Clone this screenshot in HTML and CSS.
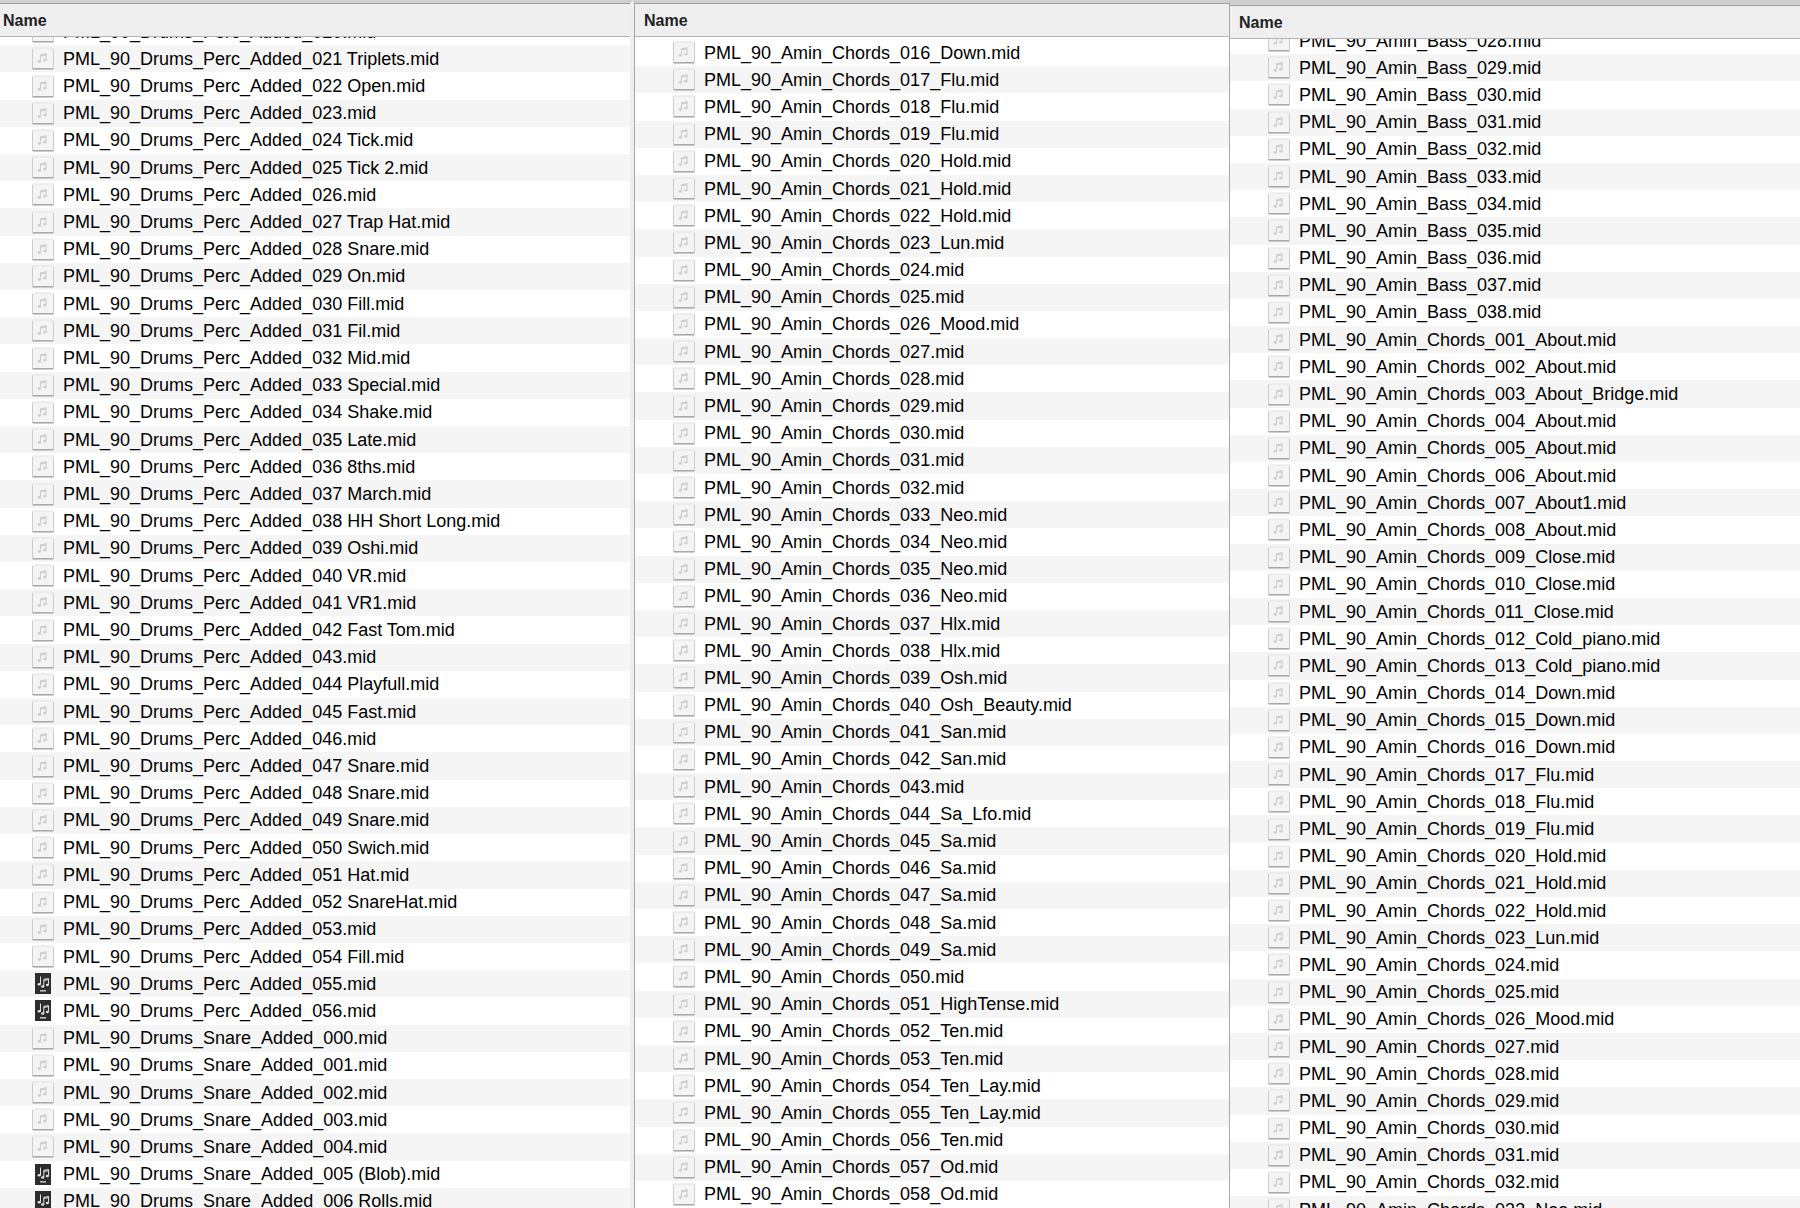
FILE: index.html
```html
<!DOCTYPE html>
<html lang="en">
<head>
    <meta charset="UTF-8">
    <meta name="viewport" content="width=device-width, initial-scale=1.0">
    <title>MIDI Files</title>
    <link rel="stylesheet" href="styles.css">
</head>
<body>
    <!-- shared file icons -->
    <svg class="sprite" aria-hidden="true">
        <symbol id="icon-midi" viewBox="0 0 22 23">
            <rect x="0.5" y="1" width="21" height="21" rx="1" fill="#f4f4f4" stroke="#e2e2e2"/>
            <path d="M0.5 2v19M21.5 2v19" stroke="#cccccc" fill="none"/>
            <path d="M0.5 21.8h21" stroke="#999999" stroke-width="1.2" fill="none"/>
            <path d="M8.5 14V8l5.5-1.2v6M8.5 9l5.5-1.2" stroke="#cfcfcf" stroke-width="1.2" fill="none"/>
            <ellipse cx="7.3" cy="14.4" rx="1.7" ry="1.4" fill="#cfcfcf"/>
            <ellipse cx="12.8" cy="13.2" rx="1.7" ry="1.4" fill="#cfcfcf"/>
        </symbol>
        <symbol id="icon-dark" viewBox="0 0 22 23">
            <rect x="3" y="1" width="16" height="21" fill="#2d2d2d"/>
            <path d="M8.5 12V4.5M11.8 14V7.3l4.8-.7v6.2M11.8 8.4l4.8-.7" stroke="#e4e4e4" stroke-width="1" fill="none"/>
            <ellipse cx="7.2" cy="12.2" rx="1.6" ry="1.3" fill="#e4e4e4"/>
            <ellipse cx="10.7" cy="14.5" rx="1.6" ry="1.3" fill="#e4e4e4"/>
            <ellipse cx="15.4" cy="13" rx="1.5" ry="1.2" fill="#e4e4e4"/>
            <path d="M8 18.8h6" stroke="#bcbcbc" stroke-width="1.6" fill="none"/>
        </symbol>
    </svg>

    <main class="panes">
        <section class="pane pane-drums">
            <h2 class="pane-header">Name</h2>
            <div class="pane-body"><ul class="files" id="drums"></ul></div>
        </section>
        <section class="pane pane-chords">
            <h2 class="pane-header">Name</h2>
            <div class="pane-body"><ul class="files" id="chords"></ul></div>
        </section>
        <section class="pane pane-bass">
            <h2 class="pane-header">Name</h2>
            <div class="pane-body"><ul class="files" id="bass"></ul></div>
        </section>
    </main>

    <script>
        const chordNames = [
            '001_About', '002_About', '003_About_Bridge', '004_About', '005_About',
            '006_About', '007_About1', '008_About', '009_Close', '010_Close',
            '011_Close', '012_Cold_piano', '013_Cold_piano', '014_Down', '015_Down',
            '016_Down', '017_Flu', '018_Flu', '019_Flu', '020_Hold',
            '021_Hold', '022_Hold', '023_Lun', '024', '025',
            '026_Mood', '027', '028', '029', '030',
            '031', '032', '033_Neo', '034_Neo', '035_Neo',
            '036_Neo', '037_Hlx', '038_Hlx', '039_Osh', '040_Osh_Beauty',
            '041_San', '042_San', '043', '044_Sa_Lfo', '045_Sa',
            '046_Sa', '047_Sa', '048_Sa', '049_Sa', '050',
            '051_HighTense', '052_Ten', '053_Ten', '054_Ten_Lay', '055_Ten_Lay',
            '056_Ten', '057_Od', '058_Od'
        ];
        const percNames = [
            '020', '021 Triplets', '022 Open', '023', '024 Tick', '025 Tick 2',
            '026', '027 Trap Hat', '028 Snare', '029 On', '030 Fill', '031 Fil',
            '032 Mid', '033 Special', '034 Shake', '035 Late', '036 8ths',
            '037 March', '038 HH Short Long', '039 Oshi', '040 VR', '041 VR1',
            '042 Fast Tom', '043', '044 Playfull', '045 Fast', '046',
            '047 Snare', '048 Snare', '049 Snare', '050 Swich', '051 Hat',
            '052 SnareHat', '053', '054 Fill', '055', '056'
        ];
        const snareNames = ['000', '001', '002', '003', '004', '005 (Blob)', '006 Rolls'];
        const bassNames = ['028', '029', '030', '031', '032', '033', '034', '035', '036', '037', '038'];

        // files that show the dark icon
        const darkIcons = ['Perc_Added_055', 'Perc_Added_056', 'Snare_Added_005', 'Snare_Added_006'];

        function withPrefix(prefix, names) {
            return names.map(name => prefix + name + '.mid');
        }

        function renderFiles(id, files) {
            document.getElementById(id).innerHTML = files.map(file => {
                const icon = darkIcons.some(part => file.includes(part)) ? 'icon-dark' : 'icon-midi';
                return `<li class="file"><svg class="file-icon" aria-hidden="true"><use href="#${icon}"/></svg><span class="file-name">${file}</span></li>`;
            }).join('');
        }

        renderFiles('drums', [
            ...withPrefix('PML_90_Drums_Perc_Added_', percNames),
            ...withPrefix('PML_90_Drums_Snare_Added_', snareNames)
        ]);
        renderFiles('chords', withPrefix('PML_90_Amin_Chords_', chordNames.slice(15)));
        renderFiles('bass', [
            ...withPrefix('PML_90_Amin_Bass_', bassNames),
            ...withPrefix('PML_90_Amin_Chords_', chordNames.slice(0, 33))
        ]);
    </script>
</body>
</html>
```
FILE: styles.css
```css
* {
    box-sizing: border-box;
}

body {
    margin: 0;
    background-color: #fff;
    font-family: "Liberation Sans", Arial, sans-serif;
    color: #000;
}

.sprite {
    display: none;
}

.panes {
    display: grid;
    grid-template-columns: 634fr 595fr 571fr;
    height: 100vh;
    overflow: hidden;
}

.pane {
    display: flex;
    flex-direction: column;
    min-width: 0;
    min-height: 0;
    border-top: 3px solid #cfcfcf;
}

.pane-drums {
    border-right: 4px solid #eeeeee;
}

.pane-chords,
.pane-bass {
    border-left: 1px solid #a8a8a8;
}

.pane-bass {
    border-top-width: 5px;
}

.pane-header {
    flex: none;
    height: 34px;
    margin: 0;
    padding-left: 3px;
    border-top: 1px solid #a0a0a0;
    border-bottom: 1px solid #b4b4b4;
    background-color: #efefef;
    font-size: 16px;
    font-weight: bold;
    line-height: 34px;
    color: #222;
}

.pane-chords .pane-header,
.pane-bass .pane-header {
    padding-left: 9px;
}

.pane-body {
    display: flex;
    flex: 1;
    min-height: 0;
    overflow: hidden;
}

/* rows share the height evenly, the lists are scrolled part of a row */
.files {
    display: flex;
    flex: 1;
    flex-direction: column;
    margin: -19px 0 -7px;
    padding: 0;
    list-style: none;
}

.pane-chords .files {
    margin: 2px 0 0;
}

.pane-bass .files {
    margin: -12px 0 -15px;
}

.file {
    display: flex;
    flex: 1;
    align-items: center;
    gap: 9px;
    min-height: 0;
    padding-left: 32px;
    font-size: 18px;
    line-height: 24px;
    white-space: nowrap;
}

.pane-chords .file,
.pane-bass .file {
    padding-left: 38px;
}

.file:nth-child(even) {
    background-color: #f5f5f5;
}

.file-icon {
    flex: none;
    width: 22px;
    height: 23px;
}
```
